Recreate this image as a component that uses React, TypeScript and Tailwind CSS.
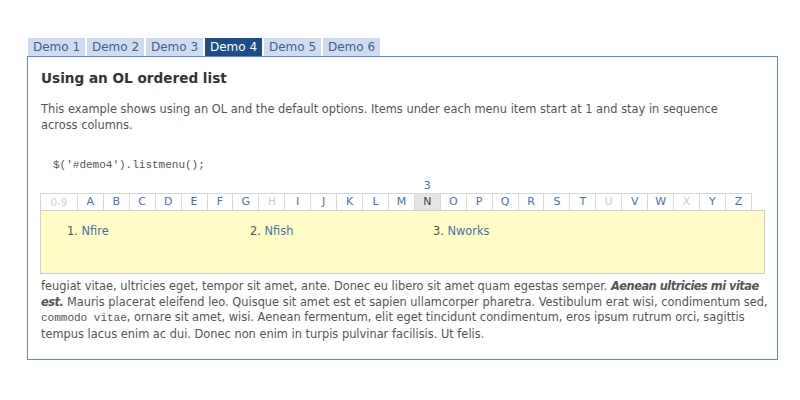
const tabs = ["Demo 1", "Demo 2", "Demo 3", "Demo 4", "Demo 5", "Demo 6"];

const letters = [
  "0-9", "A", "B", "C", "D", "E", "F", "G", "H", "I", "J", "K", "L", "M",
  "N", "O", "P", "Q", "R", "S", "T", "U", "V", "W", "X", "Y", "Z",
];
const disabled = ["0-9", "H", "U", "X"];

function LetterBar() {
  return (
    <div className="relative -ml-[1px] flex h-[18px] w-[712px] border-t border-[#d8d8d8] bg-white">
      {letters.map((l) => {
        const off = disabled.includes(l);
        const active = l === "N";
        return (
          <div
            key={l}
            className={
              (l === "0-9" ? "w-[38px] text-[10px] " : "w-[26px] text-[11px] ") +
              "relative flex items-center justify-center border-r border-[#d8d8d8] first:border-l " +
              (active ? "bg-[#e4e4e4] text-[#444] " : "") +
              (off ? "text-[#cfcfcf]" : active ? "" : "text-[#4a72ac]")
            }
          >
            {l}
            {active && (
              <span className="absolute top-[-16px] left-0 right-0 text-center text-[11px] text-[#4a72ac]">3</span>
            )}
          </div>
        );
      })}
    </div>
  );
}

export default function App() {
  return (
    <div className="h-[400px] w-[800px] bg-white pt-[38px] pl-[27px] font-['DejaVu_Sans',Verdana,sans-serif] text-[#555]">
      <div className="flex gap-[2px] pl-[1px]">
        {tabs.map((t) => (
          <div
            key={t}
            className={
              "flex h-[18px] w-[57px] items-center justify-center text-[12px] " +
              (t === "Demo 4" ? "bg-[#1d4c88] text-white" : "bg-[#cfdcef] text-[#3d5f92]")
            }
          >
            {t}
          </div>
        ))}
      </div>
      <div className="h-[304px] w-[751px] border border-[#5b8cc8] px-[13px]">
        <h2 className="mt-[13px] text-[13.6px] font-bold leading-[17px] text-[#333]">Using an OL ordered list</h2>
        <p className="mt-[14px] text-[11.4px] leading-[16px]">
          This example shows using an OL and the default options. Items under each menu item start at 1 and stay in sequence
          <br />
          across columns.
        </p>
        <pre className="mt-[26px] pl-[12px] font-['Liberation_Mono',monospace] text-[11px] leading-[12px] text-[#555]">
          $('#demo4').listmenu();
        </pre>
        <div className="relative mt-[22px]">
          <LetterBar />
          {/* dropdown lies over the top of the text below */}
          <div className="absolute top-[17px] -left-[1px] z-10 flex h-[64px] w-[725px] border border-[#cfcfcf] bg-[#fffcc6] pt-[12px] text-[11.4px]">
            {["Nfire", "Nfish", "Nworks"].map((n, i) => (
              <div key={n} className="w-[183px] pl-[26px]">
                <span className="text-[#555]">{i + 1}. </span>
                <span className="text-[#4a72ac]">{n}</span>
              </div>
            ))}
          </div>
          <p className="mt-[68px] whitespace-nowrap text-[11.4px] leading-[15.5px]">
            feugiat vitae, ultricies eget, tempor sit amet, ante. Donec eu libero sit amet quam egestas semper.{" "}
            <em className="font-bold tracking-[-0.5px]">Aenean ultricies mi vitae</em>
            <br />
            <em className="font-bold tracking-[-0.5px]">est.</em> Mauris placerat eleifend leo. Quisque sit amet est et sapien ullamcorper pharetra. Vestibulum erat wisi, condimentum sed,
            <br />
            <code className="font-['Liberation_Mono',monospace] text-[11px]">commodo vitae</code>, ornare sit amet, wisi. Aenean fermentum, elit eget tincidunt condimentum, eros ipsum rutrum orci, sagittis
            <br />
            tempus lacus enim ac dui. Donec non enim in turpis pulvinar facilisis. Ut felis.
          </p>
        </div>
      </div>
    </div>
  );
}
